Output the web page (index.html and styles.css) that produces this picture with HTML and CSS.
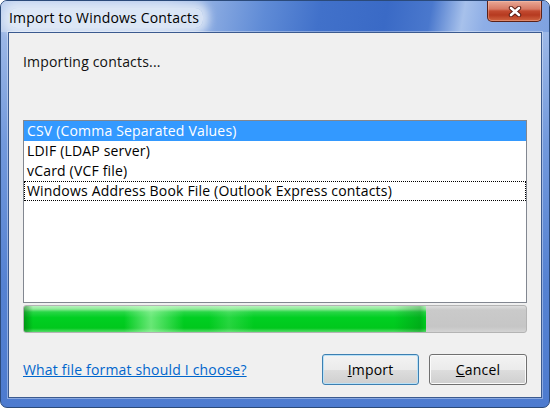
FILE: index.html
```html
<!DOCTYPE html>
<html>
<head>
<meta charset="utf-8">
<link rel="stylesheet" href="styles.css">
</head>
<body>
<div class="window">
  <div class="titlebar">
    <span class="title">Import to Windows Contacts</span>
    <button class="close" aria-label="Close">
      <svg width="14" height="11" viewBox="0 0 14 11">
        <path d="M3 2 L11 9 M11 2 L3 9" stroke="#5a1a12" stroke-width="4.4" stroke-linecap="round"/>
        <path d="M3 2 L11 9 M11 2 L3 9" stroke="#ffffff" stroke-width="2.6" stroke-linecap="round"/>
      </svg>
    </button>
  </div>
  <div class="client">
    <p class="heading">Importing contacts...</p>
    <ul class="list">
      <li class="item selected">CSV (Comma Separated Values)</li>
      <li class="item">LDIF (LDAP server)</li>
      <li class="item">vCard (VCF file)</li>
      <li class="item focused">Windows Address Book File (Outlook Express contacts)</li>
    </ul>
    <div class="progress"><div class="fill" style="width:80%"></div></div>
    <div class="footer">
      <a class="help" href="#">What file format should I choose?</a>
      <div class="buttons">
        <button class="btn default"><u>I</u>mport</button>
        <button class="btn"><u>C</u>ancel</button>
      </div>
    </div>
  </div>
</div>
</body>
</html>
```

FILE: styles.css
```css
html, body {
  margin: 0;
  padding: 0;
  background: #ffffff;
}

body {
  font-family: "Open Sans", "Noto Sans", sans-serif;
  font-size: 14px;
  letter-spacing: 0.18px;
  color: #000;
}

.window {
  width: 550px;
  height: 408px;
  box-sizing: border-box;
  border: 1px solid #2b4a7a;
  border-radius: 7px;
  display: flex;
  flex-direction: column;
  overflow: hidden;
  background: linear-gradient(to bottom, #a9c1ea 0, #7299dc 35%, #5582d2 70%, #4d7bcf 100%);
}

.titlebar {
  height: 31px;
  flex: none;
  display: flex;
  align-items: flex-start;
  background: linear-gradient(100deg, #bdd0ef 0%, #aec5eb 30%, #5f8bd6 48%, #4171ca 58%, #3a6ac6 70%, #4a78cd 78%, #a7c1eb 84%, #8eaee6 88%, #7fa2e0 100%);
}

.title {
  margin: 7px 0 0 8px;
  line-height: 20px;
  padding: 0 4px 0 0;
  color: #000;
  background: rgba(230, 237, 248, 0.8);
  box-shadow: 0 0 8px 6px rgba(230, 237, 248, 0.8);
  border-radius: 8px;
}

.close {
  margin: 0 7px 0 auto;
  width: 55px;
  height: 21px;
  padding: 0;
  display: flex;
  align-items: center;
  justify-content: center;
  border: 1px solid #5b2118;
  border-top: none;
  border-radius: 0 0 5px 5px;
  background: linear-gradient(to bottom, #e9a896 0%, #d77a65 40%, #c24a30 50%, #b63a20 70%, #d06542 100%);
  box-shadow: inset 0 0 0 1px rgba(255, 210, 190, 0.35);
}

.client {
  flex: 1;
  margin: 0 7px 9px;
  border: 1px solid #3b5a8f;
  background: #f0f0f0;
  padding: 19px 14px 0;
  display: flex;
  flex-direction: column;
  box-shadow: 0 0 0 1px rgba(255, 255, 255, 0.35);
}

.heading {
  margin: 0;
  line-height: 20px;
  color: #111;
}

.list {
  margin: 48px 0 0;
  padding: 0;
  list-style: none;
  height: 183px;
  box-sizing: border-box;
  border: 1px solid #828790;
  background: #ffffff;
}

.item {
  height: 20px;
  line-height: 20px;
  padding-left: 3px;
  white-space: nowrap;
}

.item.selected {
  background: #3399ff;
  color: #ffffff;
}

.item.short {
  height: 19px;
}

.item.focused {
  outline: 1px dotted #000;
  outline-offset: -1px;
}

.progress {
  margin-top: 2px;
  height: 28px;
  box-sizing: border-box;
  border: 1px solid #b4b4b4;
  border-radius: 3px;
  overflow: hidden;
  background: linear-gradient(to bottom, #dedede 0, #cacaca 4px, #c6c6c6 80%, #d4d4d4 100%);
}

.fill {
  height: 100%;
  background:
    linear-gradient(to right, rgba(0, 90, 10, 0.45) 0, rgba(0, 90, 10, 0) 9px, rgba(255, 255, 255, 0) 100px, rgba(190, 255, 190, 0.55) 127px, rgba(255, 255, 255, 0) 160px, rgba(255, 255, 255, 0) 185px, rgba(190, 255, 190, 0.2) 205px, rgba(255, 255, 255, 0) 230px, rgba(0, 0, 0, 0) 370px, rgba(0, 90, 10, 0.25) 396px, rgba(0, 90, 10, 0) 402px),
    linear-gradient(to bottom, #b7f3bd 0, #8fea98 3px, #28d646 6px, #00cf22 45%, #00c81d 85%, #55dc68 100%);
}

.footer {
  margin-top: 21px;
  height: 31px;
  display: flex;
  align-items: center;
  justify-content: space-between;
}

.help {
  color: #0066cc;
  text-decoration: underline;
  line-height: 20px;
}

.buttons {
  display: flex;
  gap: 10px;
}

.btn {
  width: 98px;
  height: 31px;
  padding: 0;
  font-family: "Open Sans", "Noto Sans", sans-serif;
  font-size: 14px;
  letter-spacing: 0.18px;
  color: #000;
  border: 1px solid #707070;
  border-radius: 3px;
  background: linear-gradient(to bottom, #f3f3f3 0%, #ebebeb 50%, #dddddd 51%, #cfcfcf 100%);
  box-shadow: inset 0 0 0 1px #fbfbfb;
}

.btn.default {
  width: 97px;
  border-color: #3c7fb1;
  box-shadow: inset 0 0 0 1px #b9e1f7;
}
```
